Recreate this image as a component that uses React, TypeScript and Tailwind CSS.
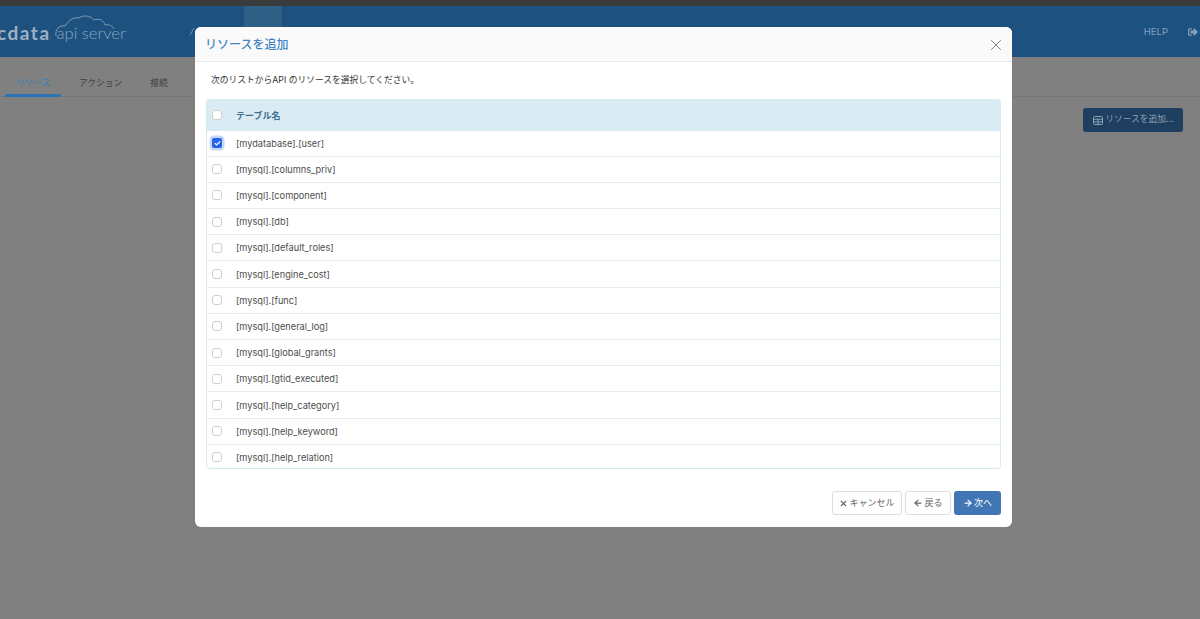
import { ArrowLeft, ArrowRight, Check, X } from 'lucide-react';
import { FaSignOutAlt } from 'react-icons/fa';

const FONT = "font-['Inter','Noto_Sans_CJK_JP',sans-serif]";

const rows = [
  '[mydatabase].[user]',
  '[mysql].[columns_priv]',
  '[mysql].[component]',
  '[mysql].[db]',
  '[mysql].[default_roles]',
  '[mysql].[engine_cost]',
  '[mysql].[func]',
  '[mysql].[general_log]',
  '[mysql].[global_grants]',
  '[mysql].[gtid_executed]',
  '[mysql].[help_category]',
  '[mysql].[help_keyword]',
  '[mysql].[help_relation]'
];

function Box({ checked }: { readonly checked?: boolean }) {
  if (checked) {
    return (
      <span className="flex h-[10px] w-[10px] items-center justify-center rounded-[2px] bg-[#2563eb] shadow-[0_0_0_2.5px_#c4d7f7]">
        <Check className="h-[7px] w-[7px] text-white" strokeWidth={4} />
      </span>
    );
  }
  return <span className="block h-[10px] w-[10px] rounded-[3px] border border-[#cfcfcf] bg-white" />;
}

function Logo() {
  return (
    <div className="ml-[-3px] flex w-[188px] shrink-0 items-center pt-[3px] font-['Lato',sans-serif] text-[#8ea6bb]">
      <span className="text-[19px] font-bold tracking-[1.5px] text-[#9db1c3]">cdata</span>
      <div className="relative ml-[6px]">
        <svg className="absolute left-[-3px] top-[-7px]" width="62" height="24" viewBox="0 0 62 24" fill="none" stroke="#7f9cb6" strokeWidth="1">
          <path d="M2 22C1 15 5 11 11 12C16 5 20 3 25 4C29 1 36 1 40 6C46 4 50 7 51 11C55 10 59 12 60 15" />
        </svg>
        <span className="relative text-[16.5px] font-light">api server</span>
      </div>
    </div>
  );
}

export default function App() {
  return (
    <div className={`relative h-[619px] w-[1200px] overflow-hidden bg-[#808080] ${FONT}`}>
      <div className="h-[6px] bg-[#3b3b3b]" />

      <header className="relative flex h-[51px] items-center bg-[#1d5180]">
        <Logo />
        <svg className="absolute left-[189px] top-[21px]" width="6" height="9" viewBox="0 0 6 9" fill="none" stroke="#6c90ae" strokeWidth="1">
          <path d="M1 8L5 1" />
        </svg>
        <div className="ml-[59px] h-full w-[38px] self-start bg-[#2e5f85]" />
        <div className="ml-auto flex items-center gap-[20px] pr-[2px] pt-[1px] text-[#85a0b9]">
          <span className="text-[9.5px]">HELP</span>
          <FaSignOutAlt className="h-[10px] w-[10px]" />
        </div>
      </header>

      <nav className="flex h-[40px] items-end border-b border-[#767676] pl-[5px] text-[8.75px]">
        <span className="mb-[-1px] flex h-[28px] w-[56px] items-start justify-center border-b-[3px] border-[#2a75b3] pt-[8px] font-medium text-[#3f80b5]">
          リソース
        </span>
        <span className="ml-[18px] h-[27px] pt-[8px] text-[#404040]">アクション</span>
        <span className="ml-[28px] h-[27px] pt-[8px] text-[#404040]">接続</span>
      </nav>

      <div className="flex justify-end pr-[17px] pt-[11px]">
        <button className="flex h-[24px] w-[100px] items-center justify-center gap-[2px] rounded-[3px] bg-[#1f3f60] pl-[1px] text-[8.75px] text-[#8ba0b4]">
          <svg width="10" height="9" viewBox="0 0 10 9" fill="none" stroke="currentColor" strokeWidth="1">
            <rect x="0.5" y="0.5" width="9" height="8" rx="1" />
            <path d="M0.5 3.2H9.5M0.5 5.9H9.5M5 3V8.5" />
          </svg>
          リソースを追加...
        </button>
      </div>

      <div className="absolute left-[195px] top-[27px] flex h-[500px] w-[817px] flex-col rounded-[6px] bg-white">
        <div className="flex h-[35px] shrink-0 items-center justify-between rounded-t-[6px] border-b border-[#e8e8e8] bg-[#fafafa] pl-[10px] pr-[7px]">
          <h2 className="mt-[2px] text-[12px] font-medium text-[#3f86c2]">リソースを追加</h2>
          <X className="mt-[1px] h-[18px] w-[18px] text-[#777777]" strokeWidth={1.25} />
        </div>

        <p className="ml-[16px] mt-[12px] h-[25px] shrink-0 text-[8.75px] text-[#333333]">次のリストからAPI のリソースを選択してください。</p>

        <div className="mx-[11px] h-[370px] shrink-0 overflow-hidden rounded-[3px] border border-[#d6eaf2]">
          <div className="flex h-[30.5px] items-center bg-[#dbebf3]">
            <span className="flex w-[20px] justify-center"><Box /></span>
            <span className="ml-[9px] text-[9px] font-semibold text-[#3d6f92]">テーブル名</span>
          </div>
          {rows.map((row, index) => (
            <div key={row} className="flex h-[26.2px] items-center border-b border-[#e6eef1]">
              <span className="flex w-[20px] justify-center"><Box checked={index === 0} /></span>
              <span className="ml-[9px] mt-[1px] text-[9.2px] text-[#4d4d4d]">{row}</span>
            </div>
          ))}
        </div>

        <div className="mr-[11px] mt-[22px] flex justify-end gap-[3px] text-[9px]">
          <button className="flex h-[24px] w-[70px] items-center justify-center gap-[1px] rounded-[3px] border border-[#dddddd] text-[#666666]">
            <X className="h-[9px] w-[9px]" strokeWidth={3} />
            キャンセル
          </button>
          <button className="flex h-[24px] w-[46px] items-center justify-center gap-[1px] rounded-[3px] border border-[#dddddd] text-[#666666]">
            <ArrowLeft className="h-[10px] w-[10px]" strokeWidth={3} />
            戻る
          </button>
          <button className="flex h-[24px] w-[47px] items-center justify-center gap-[1px] rounded-[3px] bg-[#3f76b3] text-white">
            <ArrowRight className="h-[10px] w-[10px]" strokeWidth={3} />
            次へ
          </button>
        </div>
      </div>
    </div>
  );
}
